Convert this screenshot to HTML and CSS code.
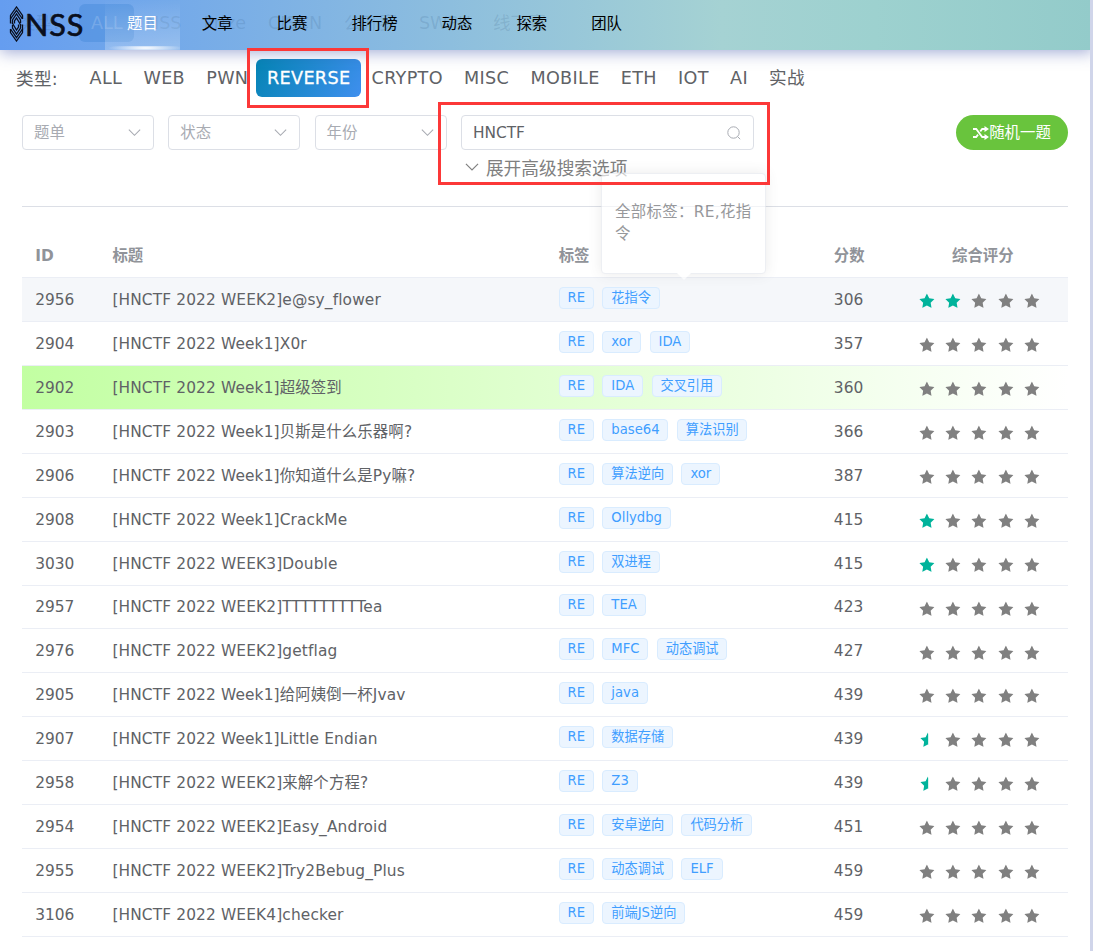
FILE: index.html
```
<!DOCTYPE html>
<html lang="zh-CN">
<head>
  <meta charset="UTF-8">
  <title>NSS 题目</title>
  <link rel="stylesheet" href="styles.css">
</head>
<body>

  <svg width="0" height="0" class="sprite">
    <symbol id="star" viewBox="0 0 1024 1024">
      <path d="M283.84 867.84 512 747.776l228.16 119.936a6.4 6.4 0 0 0 9.28-6.72l-43.52-254.08 184.512-179.904a6.4 6.4 0 0 0-3.52-10.88l-255.104-37.12L517.76 147.904a6.4 6.4 0 0 0-11.52 0L392.192 379.072l-255.104 37.12a6.4 6.4 0 0 0-3.52 10.88L318.08 606.976l-43.584 254.08a6.4 6.4 0 0 0 9.28 6.72z"/>
    </symbol>
    <symbol id="arrow" viewBox="0 0 12 12">
      <path d="M.8 3.3 6 8.6l5.2-5.3" fill="none" stroke="currentColor" stroke-width="1"/>
    </symbol>
  </svg>

  <header class="header">
    <div class="under">
      <span class="under-label">类型:</span>
      <span class="under-active">ALL</span>
      <span>NSS</span>
      <span>Prize</span>
      <span>CISCN</span>
      <span>公开赛</span>
      <span>SWPU</span>
      <span>线下赛</span>
    </div>
    <div class="logo">
      <svg width="15" height="36" viewBox="0 0 15 36" fill="none" stroke="#0a0f1c" stroke-width="1.3">
        <path d="M1.5 13V9.5L7.5 1l6 8.5V13"/>
        <path d="M1.5 17.5V13l6-8.5 6 8.5"/>
        <path d="M3.5 18v-4l4-6 4 6v3"/>
        <path d="M5.5 17.5V15l2-3 4.5 7.5"/>
        <path d="M13.5 23v3.5L7.5 35l-6-8.5V23"/>
        <path d="M13.5 18.5V23l-6 8.5-6-8.5"/>
        <path d="M11.5 18v4l-4 6-4-6v-3"/>
        <path d="M9.5 18.5V21l-2 3L3 16.5"/>
      </svg>
      <span>NSS</span>
    </div>
    <nav class="nav">
      <a class="active">题目</a>
      <a>文章</a>
      <a>比赛</a>
      <a>排行榜</a>
      <a>动态</a>
      <a>探索</a>
      <a>团队</a>
    </nav>
  </header>

  <main class="page">
    <div class="types">
      <span class="types-label">类型:</span>
      <a>ALL</a>
      <a>WEB</a>
      <a>PWN</a>
      <a class="active">REVERSE</a>
      <a>CRYPTO</a>
      <a>MISC</a>
      <a>MOBILE</a>
      <a>ETH</a>
      <a>IOT</a>
      <a>AI</a>
      <a>实战</a>
    </div>

    <div class="filters">
      <div class="select">题单<svg><use href="#arrow"/></svg></div>
      <div class="select">状态<svg><use href="#arrow"/></svg></div>
      <div class="select">年份<svg><use href="#arrow"/></svg></div>
      <div class="search-box">
        <div class="search">HNCTF
          <svg viewBox="0 0 14 14" fill="none" stroke="currentColor"><circle cx="6.5" cy="6.5" r="5.7"/><path d="m10.6 10.6 2.6 2.6"/></svg>
        </div>
        <div class="more"><svg><use href="#arrow"/></svg>展开高级搜索选项</div>
      </div>
      <button class="random">
        <svg viewBox="0 0 16 14" fill="none" stroke="#fff" stroke-width="1.8">
          <path d="M0 3h3.2l6 8H12M0 11h3.2L5 8.600M7.300 5.400 9.200 3H12"/>
          <path d="M11.5 0v6L16 3zM11.5 8v6l4.500-3z" fill="#fff" stroke="none"/>
        </svg>随机一题
      </button>
    </div>

    <div class="table" id="table">
      <div class="row head">
        <div>ID</div><div>标题</div><div>标签</div><div>分数</div><div class="rate-head">综合评分</div>
      </div>
    </div>
  </main>

  <div class="popover">全部标签：RE,花指令</div>
  <div class="mark mark-type"></div>
  <div class="mark mark-search"></div>

  <script>
    const list = [
      [2956, "[HNCTF 2022 WEEK2]e@sy_flower", ["花指令"], 306, 2],
      [2904, "[HNCTF 2022 Week1]X0r", ["xor", "IDA"], 357, 0],
      [2902, "[HNCTF 2022 Week1]超级签到", ["IDA", "交叉引用"], 360, 0],
      [2903, "[HNCTF 2022 Week1]贝斯是什么乐器啊?", ["base64", "算法识别"], 366, 0],
      [2906, "[HNCTF 2022 Week1]你知道什么是Py嘛?", ["算法逆向", "xor"], 387, 0],
      [2908, "[HNCTF 2022 Week1]CrackMe", ["Ollydbg"], 415, 1],
      [3030, "[HNCTF 2022 WEEK3]Double", ["双进程"], 415, 1],
      [2957, "[HNCTF 2022 WEEK2]TTTTTTTTTea", ["TEA"], 423, 0],
      [2976, "[HNCTF 2022 WEEK2]getflag", ["MFC", "动态调试"], 427, 0],
      [2905, "[HNCTF 2022 Week1]给阿姨倒一杯Jvav", ["java"], 439, 0],
      [2907, "[HNCTF 2022 Week1]Little Endian", ["数据存储"], 439, 0.5],
      [2958, "[HNCTF 2022 WEEK2]来解个方程?", ["Z3"], 439, 0.5],
      [2954, "[HNCTF 2022 WEEK2]Easy_Android", ["安卓逆向", "代码分析"], 451, 0],
      [2955, "[HNCTF 2022 WEEK2]Try2Bebug_Plus", ["动态调试", "ELF"], 459, 0],
      [3106, "[HNCTF 2022 WEEK4]checker", ["前端JS逆向"], 459, 0]
    ];

    const table = document.getElementById("table");

    list.forEach(([id, title, tags, score, rate]) => {
      let stars = "";
      for (let i = 1; i <= 5; i++) {
        let cls = "star";
        if (rate >= i) cls += " on";
        else if (rate > i - 1) cls += " half";
        stars += `<svg class="${cls}"><use href="#star"/></svg>`;
      }

      const row = document.createElement("div");
      row.className = "row";
      if (id === 2956) row.classList.add("hover");
      if (id === 2902) row.classList.add("solved");
      row.innerHTML = `
        <div>${id}</div>
        <div class="title">${title}</div>
        <div class="tags">${["RE", ...tags].map(t => `<span class="tag">${t}</span>`).join("")}</div>
        <div>${score}</div>
        <div class="stars">${stars}</div>`;
      table.appendChild(row);
    });
  </script>

</body>
</html>
```
FILE: styles.css
```
* {
  box-sizing: border-box;
}

body {
  margin: 0;
  height: 951px;
  overflow: hidden;
  font-family: "DejaVu Sans", "Noto Sans CJK SC", sans-serif;
  font-size: 15.4px;
  line-height: 22px;
  color: #606266;
  background: #fff;
  border-right: 3px solid #d0d5ea;
}

.sprite {
  position: absolute;
}

/* top bar */
.header {
  position: relative;
  display: flex;
  width: 100vw;
  height: 50px;
  background: linear-gradient(to right, #659df0, #a5d2d3 66%, #9dd1cf 80%, #93cbca);
  box-shadow: 0 2px 16px rgba(60, 80, 170, 0.5);
}

.under {
  position: absolute;
  top: 4px;
  left: 18px;
  display: flex;
  align-items: center;
  gap: 22px;
  height: 38px;
  font-size: 17.6px;
  color: rgba(50, 90, 130, 0.17);
  white-space: nowrap;
}

.under-label {
  width: 39px;
}

.under-active {
  width: 55px;
  height: 38px;
  margin-right: -10px;
  padding-left: 12px;
  line-height: 38px;
  border-radius: 6px;
  color: rgba(255, 255, 255, 0.18);
  background: rgba(50, 125, 210, 0.3);
}

.logo {
  position: relative;
  display: flex;
  align-items: center;
  width: 105px;
  height: 47px;
  padding-left: 9px;
  gap: 1px;
  font-family: Lato, sans-serif;
  font-size: 30.5px;
  letter-spacing: 1px;
  color: #0a0f1c;
  -webkit-text-stroke: 0.7px #0a0f1c;
}

.nav {
  position: relative;
  display: flex;
}

.nav a {
  padding: 0 22px;
  line-height: 49px;
  color: #000;
}

.nav .active {
  color: #fff;
  background:
    radial-gradient(ellipse 50% 100% at 54% 50%, #fff, rgba(255, 255, 255, 0)) bottom / 100% 4px no-repeat,
    linear-gradient(to bottom, rgba(255, 255, 255, 0), rgba(255, 255, 255, 0.25));
}

.page {
  padding: 0 22px;
}

/* type row */
.types {
  display: flex;
  align-items: center;
  height: 56px;
  margin-left: -6px;
  font-size: 17.6px;
  letter-spacing: 0.33px;
  white-space: nowrap;
}

.types-label {
  width: 63px;
  padding-top: 2px;
}

.types a {
  height: 38px;
  padding: 0 10.6px;
  line-height: 38px;
}

.types .active {
  margin-left: -2.5px;
  color: #fff;
  border-radius: 6px;
  background: linear-gradient(120deg, #0484b4, #3f8fee);
  -webkit-text-stroke: 0.3px #fff;
}

/* filters */
.filters {
  display: flex;
  align-items: flex-start;
  gap: 14.3px;
  height: 101px;
  padding-top: 9px;
  border-bottom: 1px solid #dcdfe6;
}

.select,
.search {
  display: flex;
  align-items: center;
  justify-content: space-between;
  height: 35px;
  padding: 0 12px 0 11px;
  border: 1px solid #dcdfe6;
  border-radius: 4px;
}

.select {
  width: 132px;
  color: #a8abb2;
}

.select svg {
  width: 13px;
  height: 13px;
}

.search {
  width: 293px;
}

.search svg {
  width: 14px;
  height: 14px;
  color: #a8abb2;
}

.more {
  display: flex;
  align-items: center;
  gap: 7px;
  height: 37px;
  padding-left: 4px;
  font-size: 17.7px;
  color: #808080;
}

.more svg {
  width: 14px;
  height: 14px;
  margin-bottom: 3px;
}

.random {
  display: flex;
  align-items: center;
  justify-content: center;
  width: 112px;
  height: 35px;
  margin-left: auto;
  padding: 0;
  border: none;
  border-radius: 18px;
  font: inherit;
  color: #fff;
  background: #69c43d;
}

.random svg {
  width: 16px;
  height: 14px;
}

/* problem table */
.table {
  padding-top: 27.16px;
}

.row {
  display: grid;
  grid-template-columns: 77.2px 446.3px 275.2px 77px 1fr;
  align-items: center;
  height: 43.93px;
  border-bottom: 1px solid #ebeef5;
}

.row > div {
  padding-top: 1px;
  padding-left: 13.2px;
  white-space: nowrap;
}

.row > .title {
  letter-spacing: 0.13px;
}

.head {
  font-weight: bold;
  color: #909399;
}

.row > .rate-head {
  padding-left: 0;
  text-align: center;
}

.hover {
  background: #f5f7fa;
}

.solved {
  background: linear-gradient(to right, #c2ffa2, #fff);
}

.row > .tags {
  display: flex;
  gap: 8.5px;
  margin-top: -3px;
  padding-top: 0;
}

.tag {
  height: 22px;
  padding: 0 7.9px;
  line-height: 20px;
  font-size: 13.2px;
  color: #409eff;
  background: #ecf5ff;
  border: 1px solid #d9ecff;
  border-radius: 4px;
}

.row > .stars {
  display: flex;
  gap: 6.5px;
  padding-left: 19px;
  padding-top: 3px;
}

.star {
  width: 19.8px;
  height: 19.8px;
  fill: #808080;
}

.star.on {
  fill: #00b39b;
}

.star.half {
  fill: #00b39b;
  transform: translateX(1px);
  clip-path: inset(0 9.3px 0 0);
}

/* tag tooltip, caught while fading */
.popover {
  position: absolute;
  top: 173px;
  left: 601px;
  width: 165px;
  height: 101px;
  padding: 27px 12px 27px 13px;
  letter-spacing: 0.35px;
  border: 1px solid #e4e7ed;
  border-radius: 4px;
  background: #fff;
  box-shadow: 0 0 13px rgba(0, 0, 0, 0.12);
  opacity: 0.65;
}

.popover::after {
  content: "";
  position: absolute;
  bottom: -5px;
  left: 77px;
  width: 10px;
  height: 10px;
  background: #fff;
  transform: rotate(45deg);
}

/* red highlight frames */
.mark {
  position: absolute;
  border: 3px solid #fc3838;
}

.mark-type {
  top: 48px;
  left: 247px;
  width: 122px;
  height: 60px;
}

.mark-search {
  top: 102px;
  left: 438px;
  width: 332px;
  height: 83px;
}
```
